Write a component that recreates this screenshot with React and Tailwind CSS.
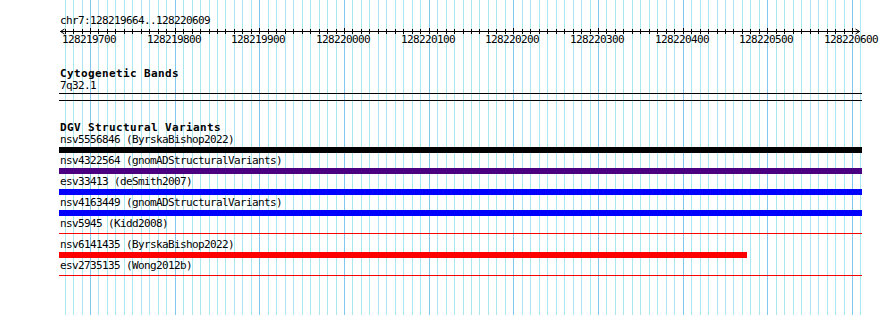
import React from "react";

const PX = 0.846667;
const LEFT = 59;
function bx(bp) {
  return 90 + (bp - 128219700) * PX;
}
const ticks = [];
for (let bp = 128219670; bp <= 128220610; bp += 10) ticks.push(bp);
const majors = [];
for (let bp = 128219700; bp <= 128220600; bp += 100) majors.push(bp);

const features = [
  { label: "nsv5556846 (ByrskaBishop2022)", kind: "bar", color: "bg-black", w: "w-full" },
  { label: "nsv4322564 (gnomADStructuralVariants)", kind: "bar", color: "bg-[#4b0082]", w: "w-full" },
  { label: "esv33413 (deSmith2007)", kind: "bar", color: "bg-[#0000ff]", w: "w-full" },
  { label: "nsv4163449 (gnomADStructuralVariants)", kind: "bar", color: "bg-[#0000ff]", w: "w-full" },
  { label: "nsv5945 (Kidd2008)", kind: "line", color: "bg-[#ff0000]", w: "w-full" },
  { label: "nsv6141435 (ByrskaBishop2022)", kind: "bar", color: "bg-[#ff0000]", w: "w-[688px]" },
  { label: "esv2735135 (Wong2012b)", kind: "line", color: "bg-[#ff0000]", w: "w-full" },
];

function Grid() {
  return (
    <svg className="absolute left-0 top-0" width="890" height="315" shapeRendering="crispEdges">
      {ticks.map((bp) => {
        const x = Math.round(bx(bp)) + 0.5;
        const major = bp % 100 === 0;
        return (
          <line key={bp} x1={x} x2={x} y1="0" y2="315" stroke={major ? "#80c8ee" : "#aae8f0"} strokeWidth="1" />
        );
      })}
    </svg>
  );
}

function Ruler() {
  return (
    <svg width="803" height="7" className="block overflow-visible" shapeRendering="crispEdges">
      <rect x="1" y="4" width="800" height="1" fill="#000" />
      {ticks
        .filter((bp) => bp <= 128220600)
        .map((bp) => {
          const x = Math.round(bx(bp)) - LEFT;
          const major = bp % 100 === 0;
          return <rect key={bp} x={x} y={major ? 1 : 2} width="1" height={major ? 6 : 5} fill="#000" />;
        })}
      <path d="M5.5 2 L1.5 4.5 L5.5 7" fill="none" stroke="#000" strokeWidth="1" shapeRendering="auto" />
      <path d="M796.5 2 L800.5 4.5 L796.5 7" fill="none" stroke="#000" strokeWidth="1" shapeRendering="auto" />
    </svg>
  );
}

export default function App() {
  return (
    <div className="relative w-[890px] h-[315px] overflow-hidden bg-white text-black font-['DejaVu_Sans_Mono',monospace] text-[11px] tracking-[-0.62px]">
      <Grid />
      <div className="relative ml-[59px] w-[803px] flex flex-col pt-[15px]">
        <div className="h-[12px] leading-[12px] pl-px whitespace-nowrap">chr7:128219664..128220609</div>
        <Ruler />
        <div className="relative h-[12px] leading-[12px]">
          {majors.map((bp) => (
            <span
              key={bp}
              className="absolute top-0 whitespace-nowrap"
              style={{ left: Math.round(bx(bp)) - LEFT - 28 }}
            >
              {bp}
            </span>
          ))}
        </div>

        <div className="mt-[22px] h-[12px] leading-[12px] pl-px font-bold tracking-[0.38px] whitespace-nowrap">Cytogenetic Bands</div>
        <div className="h-[12px] leading-[12px] pl-px whitespace-nowrap">7q32.1</div>
        <div className="mt-px h-[8px] border-y border-black" />

        <div className="mt-[21px] h-[12px] leading-[12px] pl-px font-bold tracking-[0.38px] whitespace-nowrap">DGV Structural Variants</div>
        {features.map((f) => (
          <div key={f.label} className="flex flex-col">
            <div className="h-[12px] leading-[12px] pl-px whitespace-nowrap">{f.label}</div>
            <div className="mt-px mb-[2px] h-[6px]">
              {f.kind === "bar" ? (
                <div className={`h-[6px] ${f.color} ${f.w}`} />
              ) : (
                <div className={`mt-[2px] h-px ${f.color} ${f.w}`} />
              )}
            </div>
          </div>
        ))}
      </div>
    </div>
  );
}
